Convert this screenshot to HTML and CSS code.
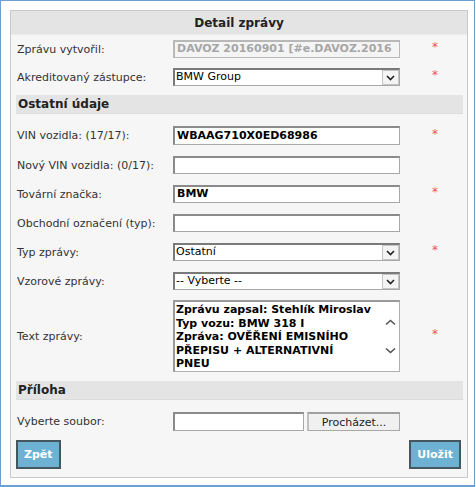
FILE: index.html
```html
<!DOCTYPE html>
<html lang="cs">
<head>
<meta charset="utf-8">
<title>Detail zprávy</title>
<link rel="stylesheet" href="styles.css">
</head>
<body>
<div class="frame">
  <div class="panel">
    <div class="panel-title">Detail zprávy</div>
    <div class="form">
      <div class="row top">
        <label class="lbl">Zprávu vytvořil:</label>
        <div class="field input disabled bold">DAVOZ 20160901 [#e.DAVOZ.2016</div>
        <span class="req">*</span>
      </div>
      <div class="row second">
        <label class="lbl">Akreditovaný zástupce:</label>
        <div class="field select"><span class="val">BMW Group</span><span class="arrow"><svg width="9" height="6" viewBox="0 0 9 6"><path d="M1 1 L4.5 4.5 L8 1" fill="none" stroke="#222" stroke-width="1.6"/></svg></span></div>
        <span class="req">*</span>
      </div>

      <div class="section">Ostatní údaje</div>

      <div class="row first">
        <label class="lbl">VIN vozidla: (17/17):</label>
        <div class="field input bold">WBAAG710X0ED68986</div>
        <span class="req">*</span>
      </div>
      <div class="row">
        <label class="lbl">Nový VIN vozidla: (0/17):</label>
        <div class="field input"></div>
        <span class="req"></span>
      </div>
      <div class="row">
        <label class="lbl">Tovární značka:</label>
        <div class="field input bold">BMW</div>
        <span class="req">*</span>
      </div>
      <div class="row">
        <label class="lbl">Obchodní označení (typ):</label>
        <div class="field input"></div>
        <span class="req"></span>
      </div>
      <div class="row">
        <label class="lbl">Typ zprávy:</label>
        <div class="field select"><span class="val">Ostatní</span><span class="arrow"><svg width="9" height="6" viewBox="0 0 9 6"><path d="M1 1 L4.5 4.5 L8 1" fill="none" stroke="#222" stroke-width="1.6"/></svg></span></div>
        <span class="req">*</span>
      </div>
      <div class="row">
        <label class="lbl">Vzorové zprávy:</label>
        <div class="field select"><span class="val">-- Vyberte --</span><span class="arrow"><svg width="9" height="6" viewBox="0 0 9 6"><path d="M1 1 L4.5 4.5 L8 1" fill="none" stroke="#222" stroke-width="1.6"/></svg></span></div>
        <span class="req"></span>
      </div>
      <div class="row tall">
        <label class="lbl">Text zprávy:</label>
        <div class="field textarea">
          <div class="ta-text">Zprávu zapsal: Stehlík Miroslav<br>Typ vozu: BMW 318 I<br>Zpráva: OVĚŘENÍ EMISNÍHO<br>PŘEPISU + ALTERNATIVNÍ<br>PNEU</div>
          <div class="ta-scroll">
            <svg width="11" height="7" viewBox="0 0 11 7"><path d="M1 5.5 L5.5 1.5 L10 5.5" fill="none" stroke="#555" stroke-width="1.6"/></svg>
            <svg width="11" height="7" viewBox="0 0 11 7"><path d="M1 1.5 L5.5 5.5 L10 1.5" fill="none" stroke="#555" stroke-width="1.6"/></svg>
          </div>
        </div>
        <span class="req">*</span>
      </div>

      <div class="section">Příloha</div>

      <div class="row first">
        <label class="lbl">Vyberte soubor:</label>
        <div class="field file">
          <div class="input file-input"></div>
          <button class="browse" type="button">Procházet...</button>
        </div>
        <span class="req"></span>
      </div>

      <div class="actions">
        <button class="btn" type="button">Zpět</button>
        <button class="btn" type="button">Uložit</button>
      </div>
    </div>
  </div>
</div>
</body>
</html>
```

FILE: styles.css
```css
* { box-sizing: border-box; }
html, body { margin: 0; padding: 0; background: #fff; }
body {
  font-family: "DejaVu Sans", Verdana, sans-serif;
  font-size: 11px;
  color: #333;
}
.frame {
  width: 475px;
  height: 487px;
  border: 1px solid #6f9fd2;
  border-bottom-width: 2px;
  padding: 9px 6px 7px 9px;
  background: #fff;
}
.panel {
  height: 468px;
  border: 1px solid #c9c9c9;
  background: #f6f6f6;
  display: flex;
  flex-direction: column;
}
.panel-title {
  height: 24px;
  line-height: 24px;
  text-align: center;
  font-weight: bold;
  font-size: 12px;
  color: #222;
  background: #e4e4e4;
  border-bottom: 1px solid #ececec;
}
.form {
  padding: 4px 5px 0 5px;
  display: flex;
  flex-direction: column;
}
.section {
  margin-top: 9px;
  height: 19px;
  line-height: 19px;
  padding-left: 2px;
  margin-right: -1px;
  background: #e4e4e4;
  border-bottom: 1px solid #dcdcdc;
  font-weight: bold;
  font-size: 12px;
  color: #222;
}
.row {
  display: grid;
  grid-template-columns: 157px 227px 1fr;
  align-items: center;
  height: 18px;
  margin-top: 11px;
}
.row.top { margin-top: 1px; }
.row.second { margin-top: 10px; }
.row.first { margin-top: 12px; height: 19px; }
.row.tall { height: 72px; margin-top: 10px; }
.lbl {
  padding-left: 1px;
  color: #333;
  white-space: nowrap;
}
.req {
  color: #ea4f6b;
  text-align: center;
  font-size: 12px;
  line-height: 12px;
  margin-top: -4px;
  padding-left: 8px;
}
.field { height: 18px; }
.row.first .field { height: 19px; }
.input {
  background: #fff;
  border: 1px solid #a8a8a8;
  border-top: 2px solid #8a8a8a;
  border-left: 2px solid #8a8a8a;
  padding: 0 2px;
  line-height: 14px;
  color: #000;
  overflow: hidden;
  white-space: nowrap;
}
.row.first .input { line-height: 15px; }
.bold { font-weight: bold; }
.disabled {
  background: #f4f4f4;
  color: #a6a6a6;
  border: 2px solid #b8b8b8;
  border-right-width: 1px;
  border-bottom-width: 1px;
}
.select {
  display: flex;
  align-items: stretch;
  background: #fff;
  border: 1px solid #a8a8a8;
  border-top: 2px solid #7a7a7a;
  border-left: 2px solid #7a7a7a;
}
.select .val {
  flex: 1;
  padding-left: 1px;
  line-height: 14px;
  color: #000;
}
.select .arrow {
  width: 17px;
  border: 1px solid #c4c4c4;
  background: #f4f4f4;
  display: flex;
  align-items: center;
  justify-content: center;
}
.textarea {
  height: 72px;
  display: flex;
  background: #fff;
  border: 1px solid #b0b0b0;
  border-top: 2px solid #9a9a9a;
  border-left: 2px solid #9a9a9a;
}
.ta-text {
  flex: 1;
  padding: 1px 2px 0 1px;
  font-weight: bold;
  color: #000;
  line-height: 13.6px;
  white-space: nowrap;
  overflow: hidden;
}
.ta-scroll {
  width: 17px;
  display: flex;
  flex-direction: column;
  justify-content: center;
  align-items: center;
  gap: 21px;
}
.file {
  display: flex;
  gap: 3px;
}
.file-input { width: 131px; height: 19px; }
.browse {
  flex: 1;
  height: 19px;
  margin: 0;
  padding: 0;
  font: inherit;
  color: #222;
  background: #f0f0f0;
  border: 1px solid #a8a8a8;
  border-top: 2px solid #a0a0a0;
  border-left: 2px solid #c0c0c0;
}
.actions {
  display: flex;
  justify-content: space-between;
  margin-top: 9px;
  padding-right: 1px;
}
.btn {
  height: 29px;
  padding: 0 6px;
  margin: 0;
  font: inherit;
  font-weight: bold;
  font-size: 11px;
  color: #fff;
  background: #6db2d2;
  border: 2px solid #46565f;
}
```
